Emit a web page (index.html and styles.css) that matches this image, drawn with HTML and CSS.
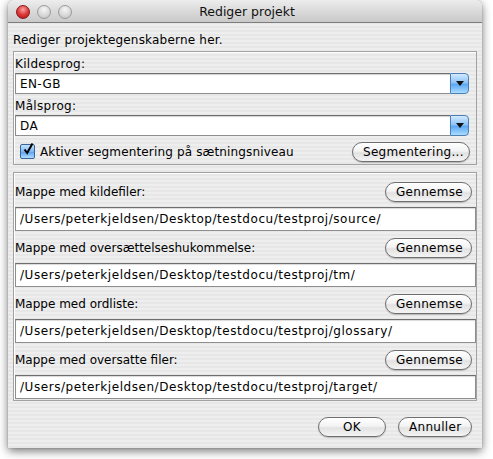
FILE: index.html
```html
<!DOCTYPE html>
<html>
<head>
<meta charset="utf-8">
<link rel="stylesheet" href="styles.css">
</head>
<body>
<div class="window">
  <div class="titlebar">
    <div class="lights">
      <span class="light red"></span>
      <span class="light"></span>
      <span class="light"></span>
    </div>
    <div class="title">Rediger projekt</div>
  </div>
  <div class="content">
    <div class="intro">Rediger projektegenskaberne her.</div>
    <div class="group g1">
      <div class="lbl">Kildesprog:</div>
      <div class="combo"><div class="combo-val">EN-GB</div><div class="combo-btn"><span class="tri"></span></div></div>
      <div class="lbl lbl2">Målsprog:</div>
      <div class="combo combo2"><div class="combo-val">DA</div><div class="combo-btn"><span class="tri"></span></div></div>
      <div class="checkrow">
        <div class="check">
          <span class="cbox"><svg width="15" height="15" viewBox="0 0 15 15"><path d="M3.5 7.5 L6.2 11 L11.5 1.5" fill="none" stroke="#000" stroke-width="2"/></svg></span>
          <span>Aktiver segmentering på sætningsniveau</span>
        </div>
        <button class="btn seg">Segmentering...</button>
      </div>
    </div>
    <div class="group g2">
      <div class="row"><span>Mappe med kildefiler:</span><button class="btn">Gennemse</button></div>
      <div class="field">/Users/peterkjeldsen/Desktop/testdocu/testproj/source/</div>
      <div class="row"><span>Mappe med oversættelseshukommelse:</span><button class="btn">Gennemse</button></div>
      <div class="field">/Users/peterkjeldsen/Desktop/testdocu/testproj/tm/</div>
      <div class="row"><span>Mappe med ordliste:</span><button class="btn">Gennemse</button></div>
      <div class="field">/Users/peterkjeldsen/Desktop/testdocu/testproj/glossary/</div>
      <div class="row"><span>Mappe med oversatte filer:</span><button class="btn">Gennemse</button></div>
      <div class="field">/Users/peterkjeldsen/Desktop/testdocu/testproj/target/</div>
    </div>
    <div class="footer">
      <button class="btn ok">OK</button>
      <button class="btn cancel">Annuller</button>
    </div>
  </div>
</div>
</body>
</html>
```

FILE: styles.css
```css
html, body {
  margin: 0;
  padding: 0;
  background: #ffffff;
}
body {
  font-family: "DejaVu Sans", "Liberation Sans", sans-serif;
  font-size: 12px;
  color: #000;
  width: 493px;
  height: 459px;
  overflow: hidden;
}
.window {
  margin-left: 8px;
  width: 474px;
  height: 448px;
  border-radius: 6px 6px 0 0;
  box-shadow: 0 3px 10px rgba(0,0,0,0.55), 0 0 1px rgba(0,0,0,0.5);
  background: repeating-linear-gradient(to bottom, #eeeeee 0, #eeeeee 2px, #e7e7e7 2px, #e7e7e7 4px);
  display: flex;
  flex-direction: column;
  overflow: hidden;
}
.titlebar {
  height: 22px;
  flex: none;
  display: flex;
  align-items: center;
  background: linear-gradient(to bottom, #ededed 0%, #dadada 50%, #c9c9c9 100%);
  border-bottom: 1px solid #7d7d7d;
  border-radius: 6px 6px 0 0;
  position: relative;
}
.lights {
  display: flex;
  gap: 7px;
  padding-left: 8px;
  padding-top: 2px;
}
.light {
  width: 12px;
  height: 12px;
  border-radius: 50%;
  border: 1px solid #9a9a9a;
  background: radial-gradient(circle at 50% 30%, #f6f6f6 0%, #d8d8d8 55%, #bdbdbd 100%);
}
.light.red {
  border-color: #8b1a1a;
  background: radial-gradient(circle at 50% 30%, #f7a3a3 0%, #e03a3a 50%, #a51010 100%);
}
.title {
  position: absolute;
  left: 0;
  right: 0;
  top: 0;
  line-height: 24px;
  text-align: center;
  font-size: 12.5px;
  color: #111;
  padding-left: 4px;
}
.content {
  flex: 1;
  padding: 0 5px 0 5px;
  display: flex;
  flex-direction: column;
}
.intro {
  height: 16px;
  line-height: 16px;
  margin-top: 9px;
  margin-bottom: 3px;
  letter-spacing: 0.2px;
}
.group {
  border: 1px solid #a2a2a2;
  box-shadow: inset 1px 1px 0 #ffffff;
  padding: 4px 2px 2px 1px;
}
.lbl {
  height: 16px;
  line-height: 16px;
  letter-spacing: 0.3px;
}
.lbl2 {
  margin-top: 4px;
}
.combo {
  margin-top: 1px;
  height: 21px;
  display: flex;
  margin-right: 5px;
}
.combo-val {
  flex: 1;
  background: #fff;
  border: 1px solid #8e8e8e;
  border-top-color: #6e6e6e;
  border-right: none;
  box-shadow: inset 0 1px 1px rgba(0,0,0,0.18);
  padding-left: 4px;
  line-height: 20px;
  letter-spacing: 0.4px;
}
.combo-btn {
  width: 17px;
  border: 1px solid #4d7fb7;
  border-radius: 0 4px 4px 0;
  background: linear-gradient(to bottom, #d3e9fd 0%, #8ec4f7 45%, #5ea8f1 55%, #a9dcff 100%);
  display: flex;
  align-items: center;
  justify-content: center;
}
.tri {
  width: 0;
  height: 0;
  border-left: 4px solid transparent;
  border-right: 4px solid transparent;
  border-top: 5px solid #111;
}
.checkrow {
  margin-top: 5px;
  height: 21px;
  display: flex;
  align-items: center;
  justify-content: space-between;
  padding-right: 4px;
}
.check {
  display: flex;
  align-items: center;
  gap: 5px;
  padding-left: 5px;
  letter-spacing: 0.15px;
}
.cbox {
  width: 13px;
  height: 13px;
  border: 1px solid #36659a;
  border-radius: 2px;
  background: linear-gradient(to bottom, #c9e3fb 0%, #7db8f2 50%, #5ba4ee 55%, #b3ddff 100%);
  position: relative;
}
.cbox svg {
  position: absolute;
  left: 0;
  top: -3px;
}
.btn {
  font-family: inherit;
  font-size: 12px;
  height: 20px;
  padding: 0 10px;
  border: 1px solid #6e6e6e;
  border-radius: 10px;
  background: linear-gradient(to bottom, #ffffff 0%, #f3f3f3 45%, #e2e2e2 55%, #f4f4f4 100%);
  box-shadow: 0 1px 1px rgba(0,0,0,0.2);
  color: #000;
  line-height: 18px;
  letter-spacing: 0.3px;
}
.seg {
  width: 118px;
}
.g2 {
  margin-top: 7px;
  padding: 4px 0 1px 1px;
}
.row {
  height: 30px;
  display: flex;
  align-items: center;
  justify-content: space-between;
  padding-right: 4px;
}
.row .btn {
  width: 87px;
}
.field {
  height: 22px;
  line-height: 22px;
  background: #fff;
  border: 1px solid #8e8e8e;
  border-top-color: #6e6e6e;
  box-shadow: inset 0 1px 1px rgba(0,0,0,0.15);
  padding-left: 4px;
  margin-bottom: 2px;
  letter-spacing: 0.55px;
}
.g2 .field:last-child {
  margin-bottom: 0;
}
.footer {
  display: flex;
  justify-content: flex-end;
  gap: 12px;
  margin-top: 16px;
  padding-right: 5px;
}
.ok { width: 68px; }
.cancel { width: 74px; }
```
